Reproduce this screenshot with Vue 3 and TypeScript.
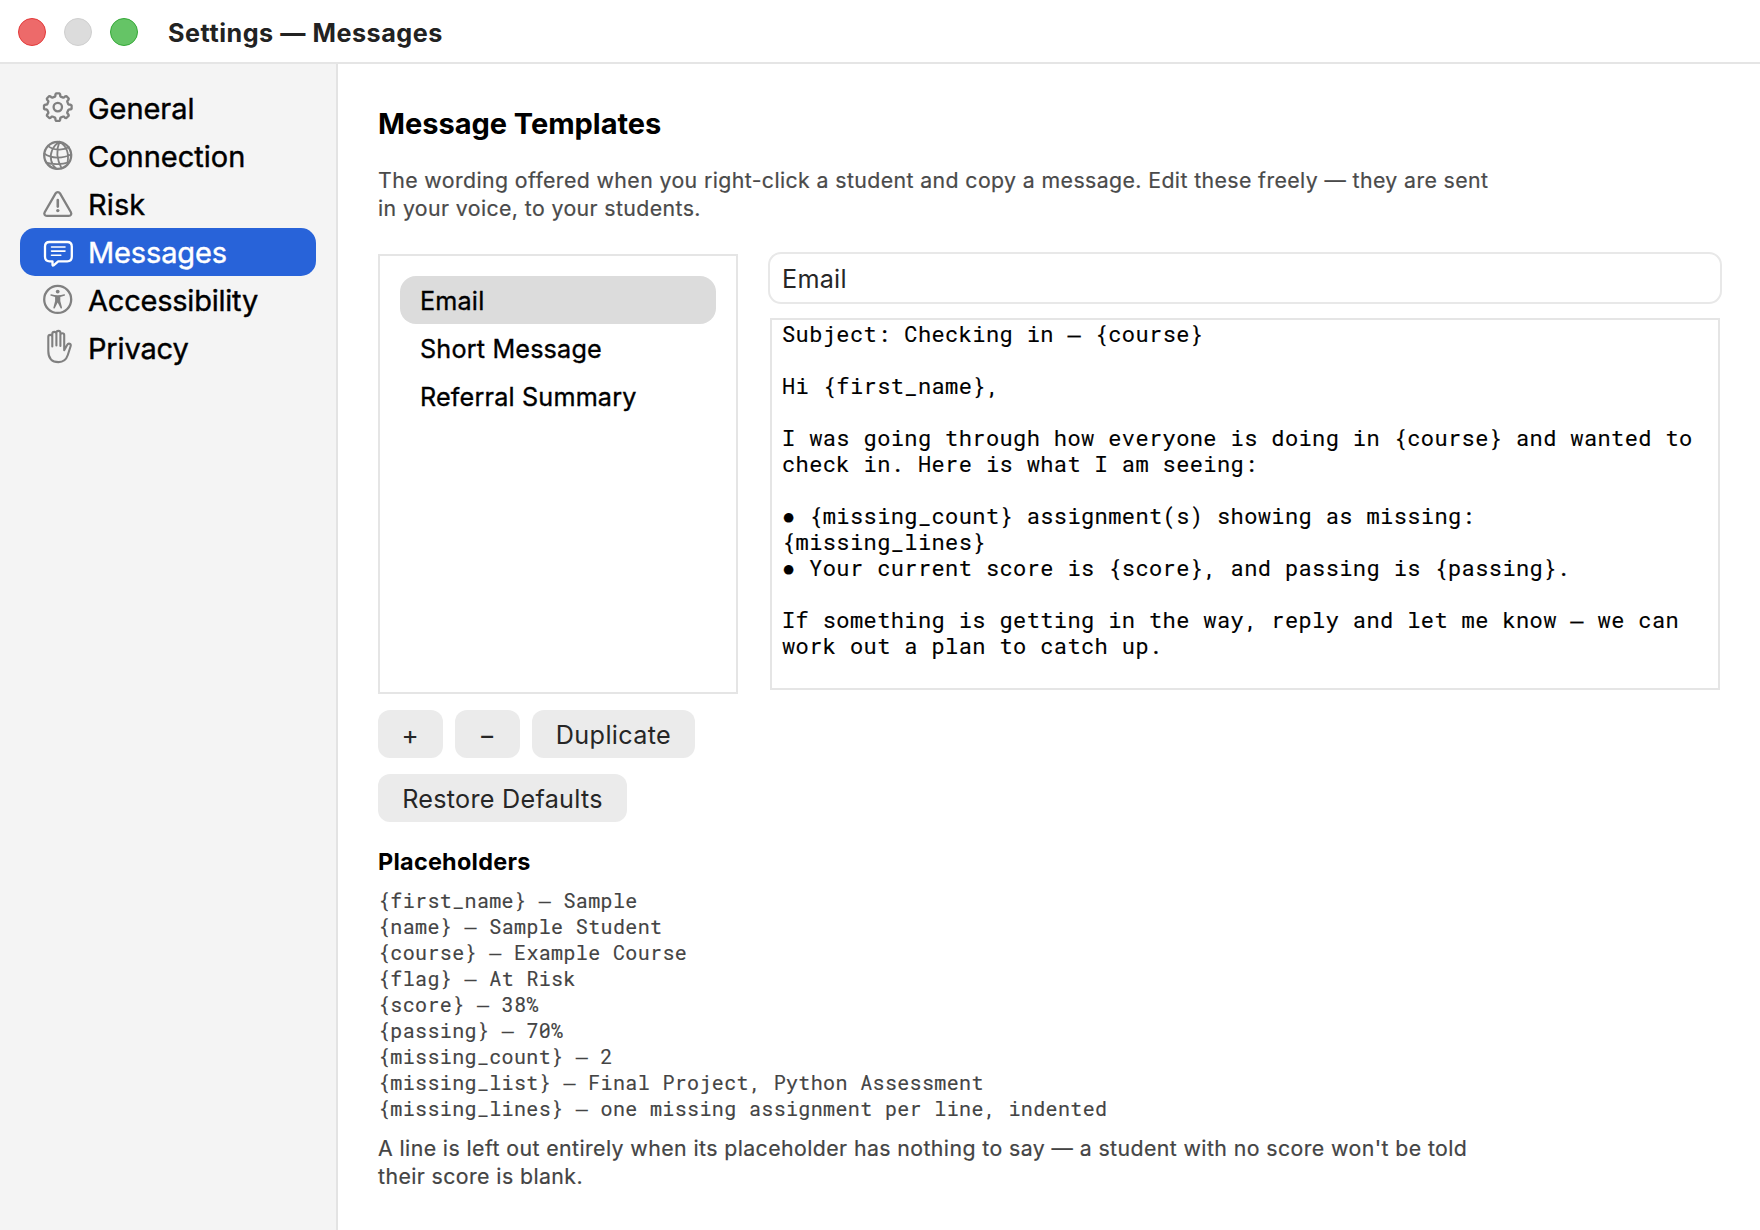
<script setup lang="ts">
import { ref } from 'vue'

type IconName = 'gear' | 'globe' | 'risk' | 'bubble' | 'access' | 'hand'

interface NavItem {
  label: string
  icon: IconName
  tracking: number
}

const navItems: NavItem[] = [
  { label: 'General', icon: 'gear', tracking: -0.06 },
  { label: 'Connection', icon: 'globe', tracking: 0 },
  { label: 'Risk', icon: 'risk', tracking: 0.1 },
  { label: 'Messages', icon: 'bubble', tracking: -0.14 },
  { label: 'Accessibility', icon: 'access', tracking: -0.22 },
  { label: 'Privacy', icon: 'hand', tracking: -0.15 },
]
const activeNav = ref('Messages')

const templates = ['Email', 'Short Message', 'Referral Summary']
const selected = ref('Email')

const bodyText = `Subject: Checking in — {course}

Hi {first_name},

I was going through how everyone is doing in {course} and wanted to
check in. Here is what I am seeing:

● {missing_count} assignment(s) showing as missing:
{missing_lines}
● Your current score is {score}, and passing is {passing}.

If something is getting in the way, reply and let me know — we can
work out a plan to catch up.`

const placeholderText = `{first_name} — Sample
{name} — Sample Student
{course} — Example Course
{flag} — At Risk
{score} — 38%
{passing} — 70%
{missing_count} — 2
{missing_list} — Final Project, Python Assessment
{missing_lines} — one missing assignment per line, indented`

// Dashes and bullets get their own span so they can use a different glyph.
const toLines = (text: string): string[][] =>
  text.split('\n').map((line) => line.split(/([—●])/).filter((part) => part !== ''))
const bodyLines = toLines(bodyText)
const placeholderLines = toLines(placeholderText)

const partClass = (part: string) => ({ dash: part === '—', bullet: part === '●' })

// Eight-toothed cog outline centred on (cx, cy).
function gearPath(cx: number, cy: number): string {
  const profile: [number, number][] = [
    [-15, 10.9], [-12, 11.5], [-10.5, 13], [-7, 13.9],
    [7, 13.9], [10.5, 13], [12, 11.5], [15, 10.9],
  ]
  const points: string[] = []
  for (let tooth = 0; tooth < 8; tooth++) {
    for (const [offset, radius] of profile) {
      const a = ((tooth * 45 + offset) * Math.PI) / 180
      points.push(`${(cx + radius * Math.sin(a)).toFixed(2)} ${(cy - radius * Math.cos(a)).toFixed(2)}`)
    }
  }
  return `M${points.join('L')}Z`
}
const gear = gearPath(15.8, 23.1)
</script>

<template>
  <div class="window">
    <header class="titlebar">
      <span class="light red"></span>
      <span class="light grey"></span>
      <span class="light green"></span>
      <h1>Settings — Messages</h1>
    </header>

    <div class="body">
      <nav class="sidebar">
        <a
          v-for="item in navItems"
          :key="item.label"
          class="nav-item"
          :class="{ active: item.label === activeNav }"
          @click="activeNav = item.label"
        >
          <svg class="icon" viewBox="0 0 32 48" width="32" height="48">
            <template v-if="item.icon === 'gear'">
              <path :d="gear" />
              <circle cx="15.8" cy="23.1" r="4.2" />
            </template>
            <template v-else-if="item.icon === 'globe'">
              <circle cx="15.7" cy="23.3" r="13.5" />
              <path
                stroke-width="1.8"
                d="M17.5 9.7C10.5 14 7.5 22 9.2 28.5C10 32 12 35 14.5 37M17.5 9.7C14.5 17 14.5 27 19.6 36.4M17.5 9.7C23 13 27.5 20 25.5 31M6 13.8C11 18.4 21 18.6 27 15.3M2.2 21.5C9 26.8 21 26.8 29.3 22.2M4.2 30.6C10 32.6 20 32.6 26.8 30.3"
              />
            </template>
            <template v-else-if="item.icon === 'risk'">
              <path
                d="M13.6 13.4C14.6 11.7 17 11.7 18 13.4L28.9 32.3C29.9 34.1 28.8 35.9 26.8 35.9H4.8C2.8 35.9 1.7 34.1 2.7 32.3Z"
              />
              <path stroke-width="2.6" d="M15.8 20V26.6" />
              <circle class="solid" cx="15.8" cy="30.6" r="1.7" />
            </template>
            <template v-else-if="item.icon === 'bubble'">
              <path
                d="M7.5 14H25.3Q29.8 14 29.8 18.5V28.8Q29.8 33.3 25.3 33.3H16.2L11.6 37.3Q10.5 38 10.5 36.7V33.3H7.5Q3 33.3 3 28.8V18.5Q3 14 7.5 14Z"
              />
              <path stroke-width="1.6" d="M9.5 19H23M9.5 23.1H23M9.5 27.2H18.8" />
            </template>
            <template v-else-if="item.icon === 'access'">
              <circle cx="15.7" cy="23.4" r="13.5" />
              <circle class="solid" cx="15.7" cy="15.6" r="1.9" />
              <path
                class="solid"
                d="M9.2 18.3Q15.7 20.1 22.2 18.3C23.2 18.2 23.4 19.5 22.4 19.8L18.3 20.9V25L20 31.6C20.2 32.7 18.9 33 18.5 32L15.7 26.5L12.9 32C12.5 33 11.2 32.7 11.4 31.6L13.1 25V20.9L9 19.8C8 19.5 8.2 18.2 9.2 18.3Z"
              />
            </template>
            <template v-else>
              <path
                stroke-width="2.1"
                d="M6.3 26V12.8C6.3 10.2 10.3 10.2 10.3 12.8V22.5V9.8C10.3 7.2 14.4 7.2 14.4 9.8V21.5V8.8C14.4 6.2 18.4 6.2 18.4 8.8V22V11C18.4 8.6 22.2 8.6 22.2 11V26.2L25.1 21C26.5 18.6 29.4 19.8 28.6 22.3L25.8 31C24.2 35.8 21.6 38.1 16.5 38.1C9.8 38.1 6.3 34 6.3 27Z"
              />
            </template>
          </svg>
          <span class="nav-label" :style="{ letterSpacing: item.tracking + 'px' }">{{ item.label }}</span>
        </a>
      </nav>

      <main class="content">
        <h2>Message Templates</h2>
        <p class="intro">
          The wording offered when you right-click a student and copy a message. Edit these freely — they are sent<br />
          in your voice, to your students.
        </p>

        <div class="columns">
          <section class="left">
            <div class="list">
              <div
                v-for="name in templates"
                :key="name"
                class="list-row"
                :class="{ selected: name === selected }"
                @click="selected = name"
              >
                {{ name }}
              </div>
            </div>
            <div class="buttons">
              <button class="symbol">+</button>
              <button class="symbol">−</button>
              <button class="duplicate">Duplicate</button>
            </div>
            <button class="restore">Restore Defaults</button>
          </section>

          <section class="right">
            <div class="field">{{ selected }}</div>
            <div class="editor">
              <div v-for="(line, n) in bodyLines" :key="n" class="line"><span
                v-for="(part, i) in line"
                :key="i"
                :class="partClass(part)"
              >{{ part }}</span></div>
            </div>
          </section>
        </div>

        <h3>Placeholders</h3>
        <div class="placeholders">
          <div v-for="(line, n) in placeholderLines" :key="n" class="line"><span
            v-for="(part, i) in line"
            :key="i"
            :class="partClass(part)"
          >{{ part }}</span></div>
        </div>
        <p class="footnote">
          A line is left out entirely when its placeholder has nothing to say — a student with no score won't be told<br />
          their score is blank.
        </p>
      </main>
    </div>
  </div>
</template>

<style>
body {
  margin: 0;
  background: #fff;
}
</style>

<style scoped>
.window {
  box-sizing: border-box;
  display: flex;
  flex-direction: column;
  width: 1760px;
  height: 1230px;
  overflow: hidden;
  background: #fff;
  color: #000;
  font-family: Inter, 'Liberation Sans', sans-serif;
}

h1, h2, h3, p {
  margin: 0;
}

.titlebar {
  box-sizing: border-box;
  flex: none;
  display: flex;
  align-items: center;
  gap: 18px;
  height: 64px;
  padding-left: 18px;
  border-bottom: 2px solid #e5e5e5;
}

.light {
  box-sizing: border-box;
  width: 28px;
  height: 28px;
  margin-top: 2px;
  border: 1px solid;
  border-radius: 50%;
}

.red {
  background: #ed6a6a;
  border-color: #e33a3a;
}

.grey {
  background: #dcdcdc;
  border-color: #cfcfcf;
}

.green {
  background: #65c466;
  border-color: #35a938;
}

h1 {
  margin-left: 12px;
  padding-top: 3px;
  font-size: 25.2px;
  font-weight: 700;
  line-height: 32px;
  letter-spacing: 0.52px;
  color: #222;
}

.body {
  flex: 1;
  display: flex;
  min-height: 0;
}

.sidebar {
  box-sizing: border-box;
  flex: none;
  width: 338px;
  padding: 20px 20px 0;
  background: #f4f4f4;
  border-right: 2px solid #e3e3e3;
}

.nav-item {
  display: flex;
  align-items: center;
  gap: 14px;
  height: 48px;
  padding-left: 22px;
  border-radius: 15px;
  font-size: 29px;
  line-height: 48px;
  color: #000;
}

.nav-label {
  padding-top: 2px;
  line-height: 46px;
  -webkit-text-stroke: 0.4px currentColor;
}

.nav-item.active {
  background: #2863d9;
  color: #fff;
}

.icon {
  flex: none;
  color: #808080;
  fill: none;
  stroke: currentColor;
  stroke-width: 2.3;
  stroke-linecap: round;
  stroke-linejoin: round;
}

.active .icon {
  color: #fff;
}

.solid {
  fill: currentColor;
  stroke: none;
}

.content {
  flex: 1;
  padding: 42px 38px 0 40px;
}

h2 {
  font-size: 29px;
  font-weight: 700;
  line-height: 36px;
  letter-spacing: -0.03px;
}

.intro,
.footnote {
  font-size: 21.3px;
  line-height: 28px;
  white-space: nowrap;
  -webkit-text-stroke: 0.2px currentColor;
}

.intro {
  margin-top: 24px;
  letter-spacing: 0.393px;
  color: #4a4a4a;
}

.columns {
  display: flex;
  align-items: flex-start;
  gap: 30px;
  margin-top: 30px;
}

.left {
  width: 360px;
  padding-top: 2px;
}

.list {
  box-sizing: border-box;
  height: 440px;
  padding: 20px 20px 0;
  border: 2px solid #e5e5e5;
}

.list-row {
  box-sizing: border-box;
  height: 48px;
  padding: 2px 0 0 20px;
  border-radius: 16px;
  font-size: 25.2px;
  line-height: 47px;
  letter-spacing: 0.17px;
  -webkit-text-stroke: 0.35px currentColor;
}

.list-row.selected {
  background: #dcdcdc;
}

.buttons {
  display: flex;
  gap: 12px;
  margin: 16px 0;
}

button {
  box-sizing: border-box;
  height: 48px;
  padding: 2px 0 0;
  border: 0;
  border-radius: 12px;
  background: #ebebeb;
  color: #262626;
  font-family: inherit;
  font-size: 25.2px;
  line-height: 46px;
}

.symbol {
  width: 65px;
  padding: 2px 1px 0 0;
  font-size: 26px;
}

.duplicate {
  width: 163px;
  letter-spacing: 0.35px;
}

.restore {
  display: block;
  width: 249px;
  letter-spacing: 0.264px;
}

.right {
  flex: 1;
}

.field {
  box-sizing: border-box;
  height: 52px;
  padding: 2px 0 0 12px;
  border: 2px solid #e8e8e8;
  border-radius: 13px;
  font-size: 25.2px;
  line-height: 47px;
  letter-spacing: 0.25px;
  color: #262626;
}

.editor,
.placeholders {
  font-family: 'Roboto Mono', 'DejaVu Sans Mono', monospace;
  -webkit-text-stroke: 0.15px currentColor;
}

.line {
  height: 26px;
  line-height: 26px;
  white-space: pre;
}

.editor {
  box-sizing: border-box;
  height: 372px;
  margin: 14px 2px 0;
  padding: 1px 0 0 10px;
  overflow: hidden;
  border: 2px solid #e5e5e5;
  font-size: 22px;
  letter-spacing: 0.39px;
}

.dash {
  font-family: 'DejaVu Sans Mono', monospace;
  line-height: 1;
}

.bullet {
  font-family: 'Liberation Mono', monospace;
  line-height: 1;
}

h3 {
  margin-top: 25px;
  font-size: 23.4px;
  font-weight: 700;
  line-height: 30px;
  letter-spacing: 0.27px;
}

.placeholders {
  margin-top: 10px;
  font-size: 20px;
  letter-spacing: 0.36px;
  color: #444;
}

.footnote {
  margin-top: 13px;
  letter-spacing: 0.412px;
  color: #444;
}
</style>
